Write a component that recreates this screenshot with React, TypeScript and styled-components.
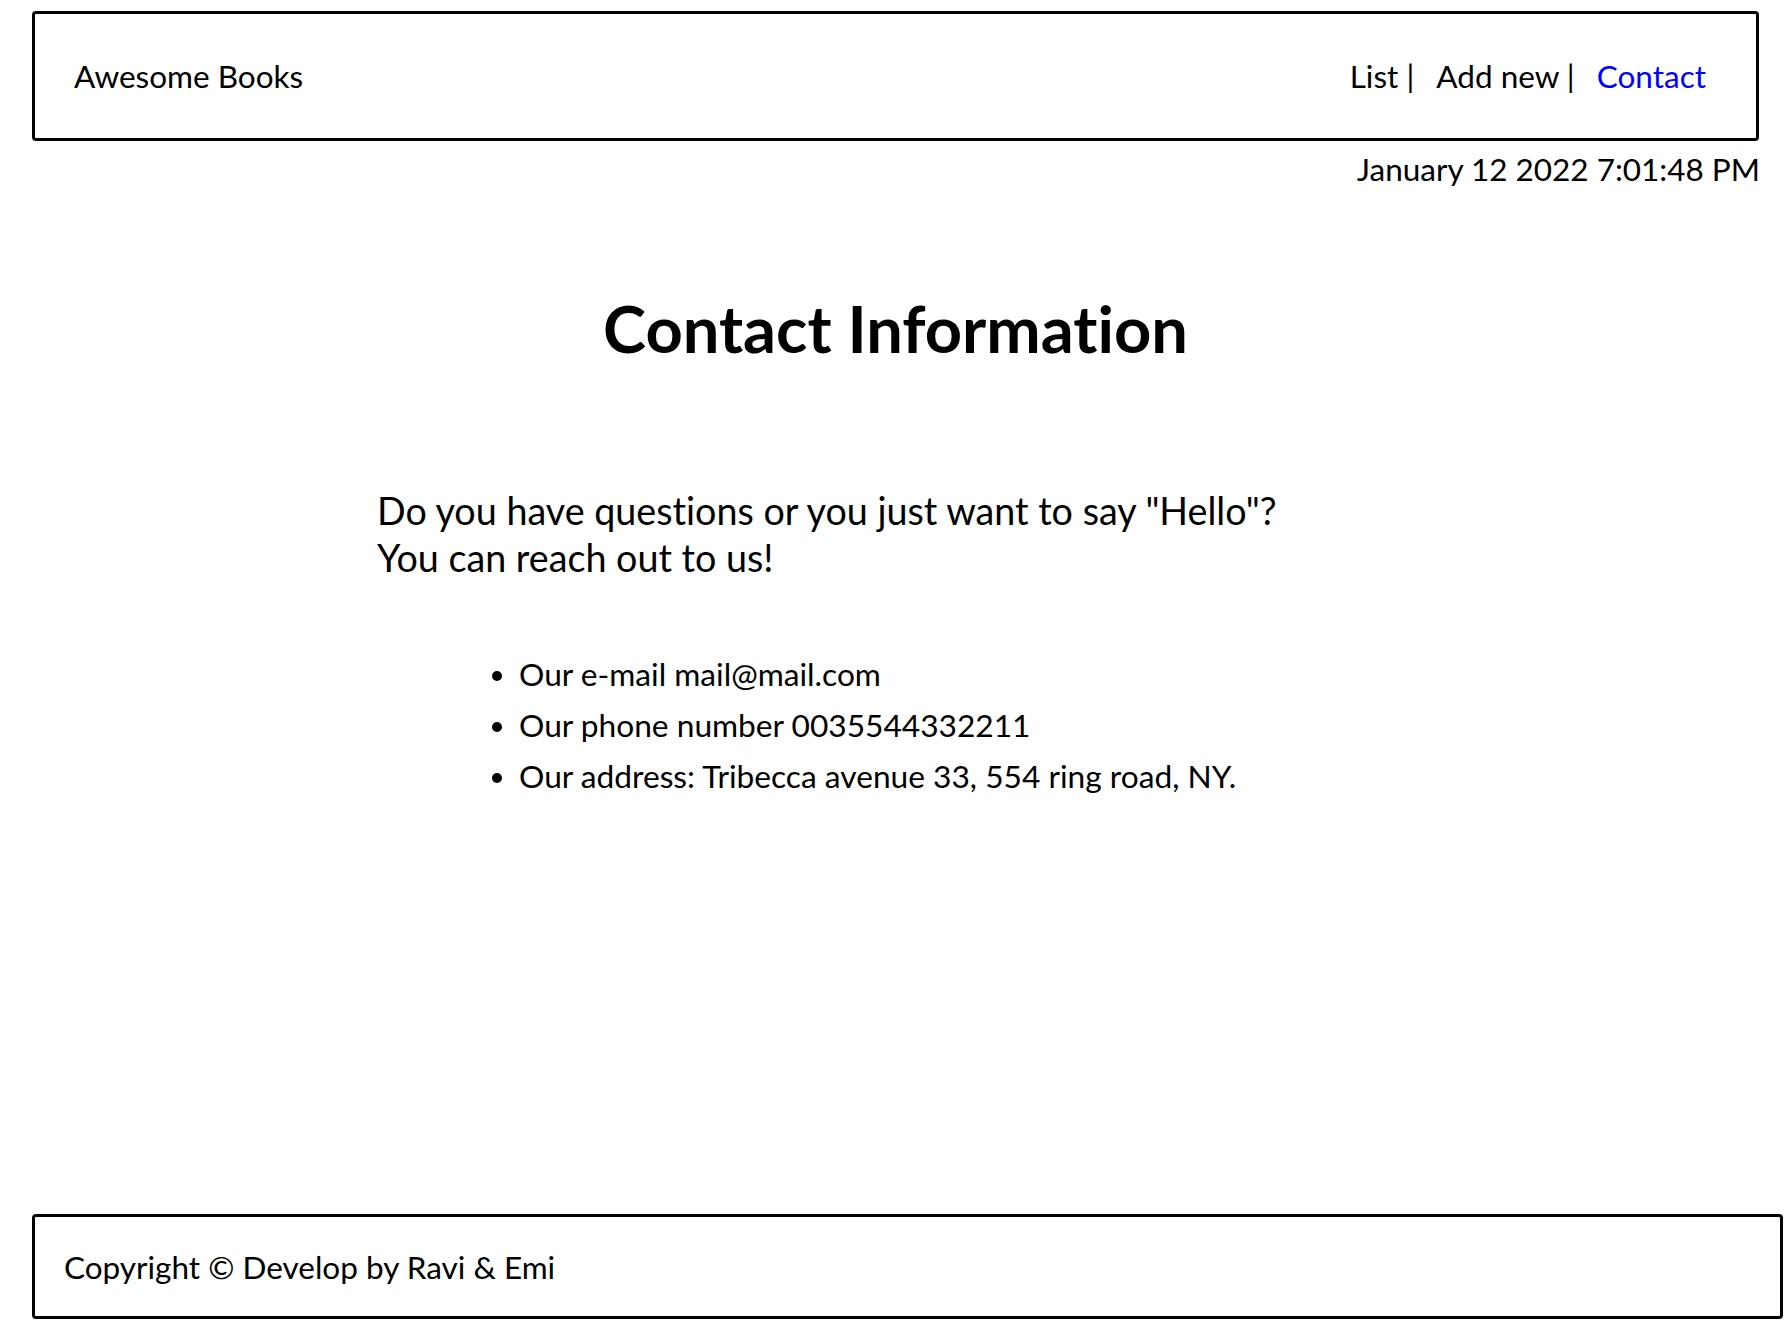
import styled, { createGlobalStyle } from 'styled-components';

const GlobalStyle = createGlobalStyle`
  html, body {
    margin: 0;
    padding: 0;
    background: #fff;
  }

  body {
    font-family: Lato, "Open Sans", sans-serif;
    font-variant-ligatures: none;
    color: #000;
  }
`;

const Page = styled.div`
  min-height: 100vh;
  box-sizing: border-box;
  display: flex;
  flex-direction: column;
  padding: 11px 7px 1px 8px;
`;

const Header = styled.header`
  margin: 0 24px 0 24px;
  height: 130px;
  box-sizing: border-box;
  border: 3px solid #000;
  border-radius: 4px;
  display: flex;
  align-items: center;
  justify-content: space-between;
  padding: 0 50px 0 39px;
`;

const Brand = styled.span`
  font-size: 31.5px;
`;

const Nav = styled.nav`
  display: flex;
  gap: 22px;
  font-size: 31.5px;
`;

const NavLink = styled.a<{ active?: boolean }>`
  color: ${props => (props.active ? '#0000ff' : '#000')};
  text-decoration: none;
`;

const DateLine = styled.div`
  margin: 0 23px 0 24px;
  text-align: right;
  font-size: 31.5px;
  line-height: 40px;
  padding-top: 8px;
`;

const Main = styled.main`
  flex: 1;
  display: flex;
  flex-direction: column;
`;

const Title = styled.h1`
  margin: 99px 0 0;
  text-align: center;
  font-size: 65px;
  font-weight: 700;
  line-height: 80px;
`;

const Intro = styled.p`
  margin: 119px 0 0 369px;
  font-size: 37.7px;
  line-height: 47px;
`;

const InfoList = styled.ul`
  margin: 68px 0 0 471px;
  padding-left: 40px;
  font-size: 31.7px;
  line-height: 51px;
`;

const Footer = styled.footer`
  margin-left: 24px;
  height: 105px;
  box-sizing: border-box;
  border: 3px solid #000;
  border-radius: 4px;
  display: flex;
  align-items: center;
  padding-left: 29px;
  font-size: 31.5px;
`;

const links = [
  { label: 'List', active: false, sep: true },
  { label: 'Add new', active: false, sep: true },
  { label: 'Contact', active: true, sep: false },
];

export default function App() {
  return (
    <>
      <GlobalStyle />
      <Page>
        <Header>
          <Brand>Awesome Books</Brand>
          <Nav>
            {links.map(link => (
              <span key={link.label}>
                <NavLink href="#" active={link.active}>{link.label}</NavLink>
                {link.sep && ' |'}
              </span>
            ))}
          </Nav>
        </Header>
        <DateLine>January 12 2022 7:01:48 PM</DateLine>
        <Main>
          <Title>Contact Information</Title>
          <Intro>
            Do you have questions or you just want to say "Hello"?
            <br />
            You can reach out to us!
          </Intro>
          <InfoList>
            <li>Our e-mail mail@mail.com</li>
            <li>Our phone number 0035544332211</li>
            <li>Our address: Tribecca avenue 33, 554 ring road, NY.</li>
          </InfoList>
        </Main>
        <Footer>Copyright © Develop by Ravi &amp; Emi</Footer>
      </Page>
    </>
  );
}
